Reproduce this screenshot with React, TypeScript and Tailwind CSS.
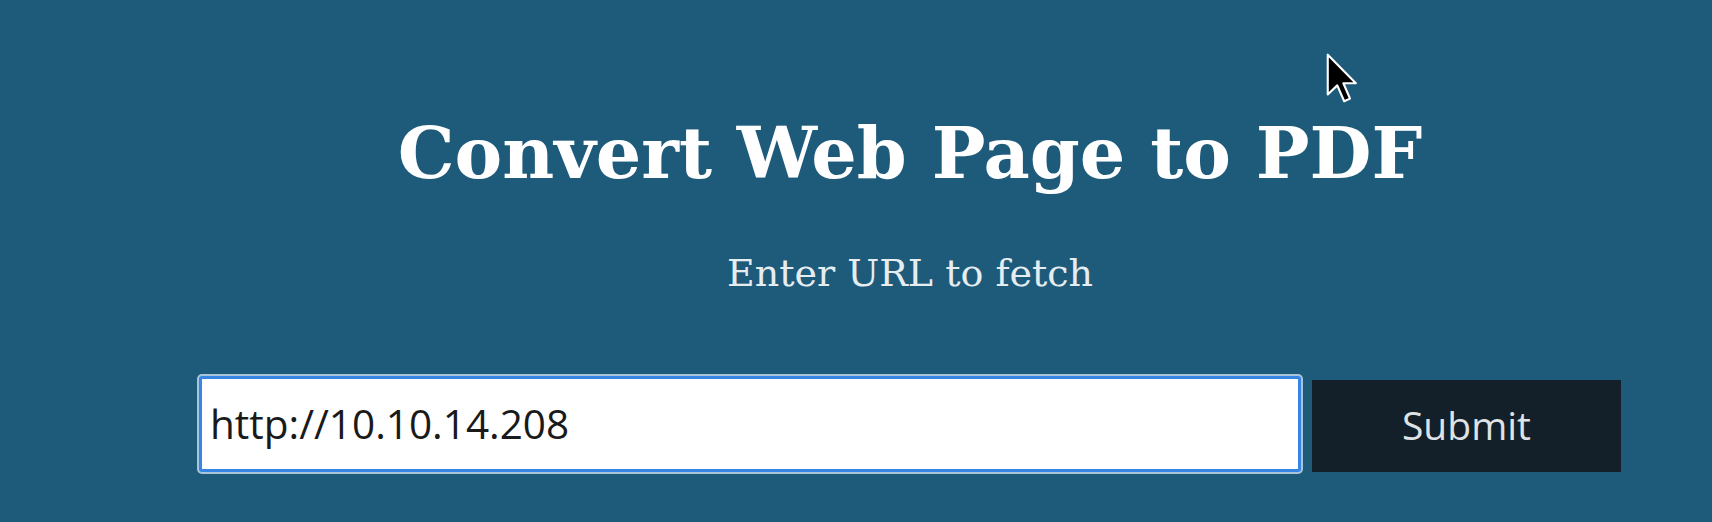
import { useState } from 'react'

export default function App() {
  const [url, setUrl] = useState('http://10.10.14.208')

  return (
    <div className="relative h-[522px] w-full overflow-hidden bg-[#1e5b7b]">
      <div className="flex flex-col items-center pl-[199px] pr-[91px] pt-[118px]">
        <h1 className="text-center font-['DejaVu_Serif',serif] text-[71.5px] font-bold leading-none text-white">
          Convert Web Page to PDF
        </h1>
        <p className="mt-[64px] text-center font-['DejaVu_Serif',serif] text-[38px] leading-none text-[#e6edf1]">
          Enter URL to fetch
        </p>

        <form
          className="mt-[84px] flex w-full items-end gap-[11px]"
          onSubmit={(e) => e.preventDefault()}
        >
          <input
            type="text"
            value={url}
            onChange={(e) => setUrl(e.target.value)}
            className="h-[96px] flex-1 rounded-[3px] border-[3px] border-[#3485e4] bg-white pl-[8px] font-['Open_Sans',sans-serif] text-[40.5px] text-[#1a1a1a] shadow-[0_0_0_2px_rgba(205,224,242,0.8)] outline-none"
          />
          <button
            type="submit"
            className="h-[92px] w-[309px] bg-[#13202a] font-['Open_Sans',sans-serif] text-[39px] text-[#dfe3e6]"
          >
            Submit
          </button>
        </form>
      </div>

      {/* mouse pointer captured in the screenshot */}
      <svg
        className="absolute left-[1325px] top-[52px]"
        width="32"
        height="53"
        viewBox="0 0 12 20"
      >
        <path
          d="M1 1 L1 16 L4.6 12.6 L7.2 18.6 L9.4 17.6 L6.9 11.8 L11.6 11.8 Z"
          fill="#000"
          stroke="#fff"
          strokeWidth="0.8"
          strokeLinejoin="round"
        />
      </svg>
    </div>
  )
}
